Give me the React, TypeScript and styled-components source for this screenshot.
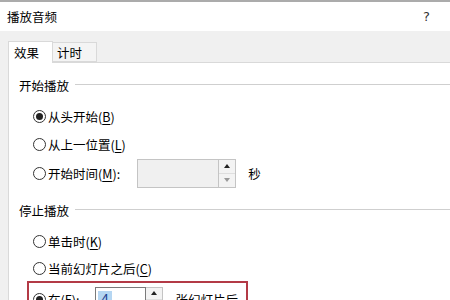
import styled, { createGlobalStyle } from "styled-components";

const GlobalStyle = createGlobalStyle`
  html, body {
    margin: 0;
    padding: 0;
    background: #f0f0f0;
  }
  body {
    font-family: "Noto Sans CJK SC", "Noto Sans", sans-serif;
    font-size: 12px;
    color: #000;
  }
`;

const Radio = ({ checked, label, accel, tail }: { checked?: boolean; label: string; accel: string; tail?: string }) => (
  <RadioLabel>
    <Circle checked={!!checked} />
    <span>
      {label}(<u>{accel}</u>){tail}
    </span>
  </RadioLabel>
);

const Spin = ({ width, height, value, disabled }: { width: number; height: number; value?: string; disabled?: boolean }) => (
  <SpinBox>
    <Field width={width} height={height} disabled={disabled}>
      {value && <Selected>{value}</Selected>}
    </Field>
    <Buttons height={height}>
      <Arrow up />
      <Arrow />
    </Buttons>
  </SpinBox>
);

const App = () => {
  return (
    <Window>
      <GlobalStyle />
      <TitleBar>
        <span>播放音频</span>
        <Help>?</Help>
      </TitleBar>
      <Body>
        <Tabs>
          <Tab active>效果</Tab>
          <Tab>计时</Tab>
        </Tabs>
        <Panel>
          <Group>
            <Legend>
              <span>开始播放</span>
              <Rule />
            </Legend>
            <Options>
              <Row>
                <Radio checked label="从头开始" accel="B" />
              </Row>
              <Row>
                <Radio label="从上一位置" accel="L" />
              </Row>
              <Row tall>
                <Radio label="开始时间" accel="M" tail=":" />
                <Gap size={17} />
                <Spin width={82} height={29} disabled />
                <Unit>秒</Unit>
              </Row>
            </Options>
          </Group>
          <Group>
            <Legend>
              <span>停止播放</span>
              <Rule />
            </Legend>
            <Options>
              <Row>
                <Radio label="单击时" accel="K" />
              </Row>
              <Row short>
                <Radio label="当前幻灯片之后" accel="C" />
              </Row>
              <Highlight>
                <Radio checked label="在" accel="F" tail=":" />
                <Gap size={16} />
                <Spin width={51} height={24} value="4" />
                <Unit>张幻灯片后</Unit>
              </Highlight>
            </Options>
          </Group>
        </Panel>
      </Body>
    </Window>
  );
};

const Window = styled.div`
  width: 450px;
  height: 300px;
  overflow: hidden;
  border-top: 2px solid #ababab;
  box-sizing: border-box;
  background: #f0f0f0;
  display: flex;
  flex-direction: column;
`;

const TitleBar = styled.div`
  height: 29px;
  flex-shrink: 0;
  background: #fff;
  display: flex;
  align-items: center;
  justify-content: space-between;
  padding: 0 20px 0 7px;
  line-height: 17px;
  font-size: 12.5px;
`;

const Help = styled.span`
  font-family: "DejaVu Sans", sans-serif;
  font-size: 13px;
  color: #333;
`;

const Body = styled.div`
  flex: 1;
  padding: 10px 0 0 8px;
  display: flex;
  flex-direction: column;
`;

const Tabs = styled.div`
  display: flex;
  align-items: flex-end;
  height: 21px;
  position: relative;
  z-index: 1;
`;

const Tab = styled.div<{ active?: boolean }>`
  box-sizing: border-box;
  height: ${p => (p.active ? "22px" : "20px")};
  margin-bottom: ${p => (p.active ? "-1px" : "0")};
  width: ${p => (p.active ? "45px" : "44px")};
  padding: 0 0 0 ${p => (p.active ? "5px" : "4px")};
  display: flex;
  align-items: center;
  background: ${p => (p.active ? "#fff" : "#f4f4f4")};
  border: 1px solid #d9d9d9;
  border-bottom: ${p => (p.active ? "none" : "1px solid #d9d9d9")};
  border-left: ${p => (p.active ? "1px solid #d9d9d9" : "none")};
  line-height: 17px;
  font-size: 12.5px;
`;

const Panel = styled.div`
  flex: 1;
  background: #fff;
  border-top: 1px solid #d9d9d9;
  border-left: 1px solid #d9d9d9;
  padding: 14px 0 0 10px;
  display: flex;
  flex-direction: column;
  gap: 14px;
`;

const Group = styled.div`
  display: flex;
  flex-direction: column;
`;

const Legend = styled.div`
  display: flex;
  align-items: center;
  height: 17px;
  line-height: 17px;
  font-size: 12.5px;
`;

const Rule = styled.div`
  flex: 1;
  height: 1px;
  background: #cfcfcf;
  margin: 0 0 3px 6px;
`;

const Options = styled.div`
  display: flex;
  flex-direction: column;
  margin-top: 8px;
  padding-left: 14px;
`;

const Row = styled.div<{ tall?: boolean; short?: boolean }>`
  display: flex;
  align-items: center;
  height: ${p => (p.tall ? "30px" : p.short ? "26px" : "28px")};
`;

const RadioLabel = styled.label`
  display: flex;
  align-items: center;
  gap: 2px;
  line-height: 17px;
  font-size: 12.5px;
  u {
    text-underline-offset: 2px;
  }
`;

const Circle = styled.span<{ checked: boolean }>`
  box-sizing: border-box;
  width: 13px;
  height: 13px;
  border-radius: 50%;
  border: 1px solid #333;
  background: #fff;
  display: flex;
  align-items: center;
  justify-content: center;
  &::after {
    content: "";
    display: ${p => (p.checked ? "block" : "none")};
    width: 7px;
    height: 7px;
    border-radius: 50%;
    background: #222;
  }
`;

const Gap = styled.span<{ size: number }>`
  width: ${p => p.size}px;
  flex-shrink: 0;
`;

const SpinBox = styled.div`
  display: flex;
`;

const Field = styled.div<{ width: number; height: number; disabled?: boolean }>`
  box-sizing: border-box;
  width: ${p => p.width}px;
  height: ${p => p.height}px;
  border: 1px solid ${p => (p.disabled ? "#c4c4c4" : "#7a7a7a")};
  background: ${p => (p.disabled ? "#f0f0f0" : "#fff")};
  display: flex;
  align-items: center;
  padding-left: 2px;
`;

const Selected = styled.span`
  background: #b5d6f2;
  color: #1b3d8f;
  padding: 0 3px;
  line-height: 16px;
  font-size: 13px;
`;

const Buttons = styled.div<{ height: number }>`
  box-sizing: border-box;
  width: 17px;
  height: ${p => p.height}px;
  border: 1px solid #c4c4c4;
  border-left: none;
  display: flex;
  flex-direction: column;
  background: #f3f3f3;
`;

const Arrow = styled.div<{ up?: boolean }>`
  flex: 1;
  display: flex;
  align-items: center;
  justify-content: center;
  border-bottom: ${p => (p.up ? "1px solid #dedede" : "none")};
  &::after {
    content: "";
    border-left: 3px solid transparent;
    border-right: 3px solid transparent;
    ${p =>
      p.up
        ? "border-bottom: 4px solid #222;"
        : "border-top: 4px solid #999;"}
  }
`;

const Unit = styled.span`
  margin-left: 12px;
  line-height: 17px;
  font-size: 12.5px;
`;

const Highlight = styled.div`
  display: flex;
  align-items: center;
  box-sizing: border-box;
  width: 221px;
  height: 36px;
  margin-left: -6px;
  padding-left: 4px;
  border: 2px solid #b33a46;
`;

export default App;
